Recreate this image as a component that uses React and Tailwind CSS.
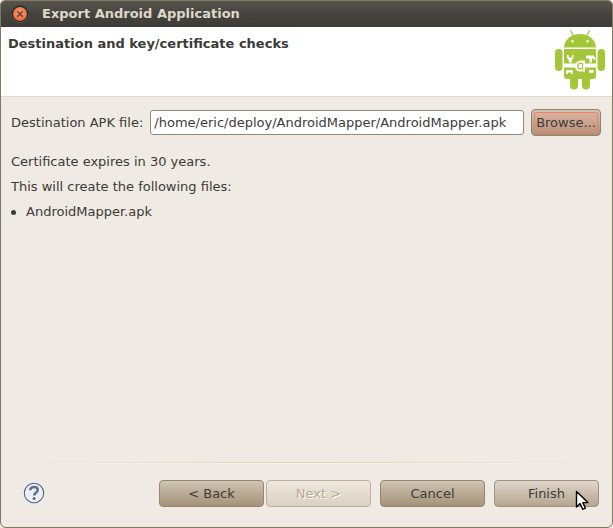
import { useState } from 'react';
import clsx from 'clsx';

const files = ['AndroidMapper.apk'];

function TitleBar({ title }) {
  return (
    <div className="flex h-[26px] shrink-0 items-center bg-linear-to-b from-[#57554e] via-[#45443f] to-[#3c3b37] pl-2.5">
      <button type="button" aria-label="Close" className="size-[18px] shrink-0">
        <svg viewBox="0 0 18 18" className="size-full">
          <defs>
            <radialGradient id="close-fill" cx="50%" cy="40%" r="65%">
              <stop offset="0" stopColor="#fb9b73" />
              <stop offset="0.6" stopColor="#f47c4e" />
              <stop offset="1" stopColor="#d9552a" />
            </radialGradient>
          </defs>
          <circle cx="9" cy="9.5" r="8.5" fill="#5f5d57" />
          <circle cx="9" cy="8.8" r="8.3" fill="#2b2a27" />
          <circle cx="9" cy="9" r="7" fill="url(#close-fill)" />
          <path d="M6.3 6.3l5.400 5.400M11.700 6.300l-5.400 5.400" stroke="#5c4438" strokeWidth="1.500" />
        </svg>
      </button>
      <h1 className="ml-[13px] text-[13px] font-bold text-[#dfd8c8]">{title}</h1>
    </div>
  );
}

function AndroidLogo() {
  return (
    <svg viewBox="0 0 52 60" className="h-[60px] w-[52px] shrink-0" aria-hidden="true">
      <g fill="#a4c639">
        <path d="M16.500 0.700l3.500 6M35.500 0.700l-3.500 6" stroke="#a4c639" strokeWidth="1.200" strokeLinecap="round" />
        <path d="M10 17.500C10.500 9.500 17 4 26 4s15.500 5.500 16 13.500z" />
        <rect x="1" y="19" width="7.500" height="22" rx="3.700" />
        <rect x="43.500" y="19" width="7.500" height="22" rx="3.700" />
        <path d="M10 19h32v27a3 3 0 0 1-3 3H13a3 3 0 0 1-3-3z" />
        <rect x="16" y="42" width="8" height="17.500" rx="4" />
        <rect x="28" y="42" width="8" height="17.500" rx="4" />
      </g>
      <g fill="#fff">
        <circle cx="18.500" cy="11.300" r="1.200" />
        <circle cx="33.500" cy="11.300" r="1.200" />
        {/* belt */}
        <path d="M10 33.500h12v4H10zM31 33.500h11v4H31z" />
        {/* wrench and hammer */}
        <path d="M13 25v3l1.800 2v2.500h3V30l1.700-2v-3h-1.600v2.500h-3.200V25z" />
        <path d="M32 25.500h7.500l1.800 2V30h-1.600v-1.500H38v4h-2.500v-4H32z" />
        <path d="M12 44v-2.500a1.500 1.500 0 0 1 1.500-1.500h4a1.500 1.500 0 0 1 1.500 1.500V44h-1.700v-1.500h-3.500V44zM35 40h4.500v2.800H35z" />
        {/* buckle */}
        <path d="M31 30.500v11h-5.300a5 5 0 0 1-4.500-4.800v-0.700a5.500 5.500 0 0 1 5.500-5.500z" />
      </g>
      <path d="M28.500 32.700v7M28.500 33.400h-2a2.700 2.700 0 0 0 0 5.500h2" fill="none" stroke="#a4c639" strokeWidth="1.300" />
    </svg>
  );
}

function HelpIcon() {
  return (
    <svg viewBox="0 0 22 22" className="size-[22px]">
      <circle cx="11" cy="11" r="9.700" fill="#eff0f1" stroke="#4c6188" strokeWidth="1.100" />
      <path
        d="M7.200 8.200C7.300 5.700 8.900 4.900 11 4.900c2.300 0 3.800 1.100 3.800 3 0 2.700-3.700 2.800-3.700 5.600"
        fill="none"
        stroke="#5d7194"
        strokeWidth="2.500"
      />
      <circle cx="11.100" cy="16.500" r="1.600" fill="#5d7194" />
    </svg>
  );
}

function Cursor() {
  return (
    <svg viewBox="0 0 14 21" className="pointer-events-none absolute top-2.5 right-2.5 h-[21px] w-[14px]">
      <path
        d="M1.500 1.500v15.500l3.600-3.400 2.600 5.700 2.700-1.200-2.500-5.500h5z"
        fill="#fff"
        stroke="#000"
        strokeWidth="1.400"
        strokeLinejoin="round"
      />
    </svg>
  );
}

function Divider() {
  return (
    <div className="mx-3 shrink-0">
      <div className="h-px bg-linear-to-r from-transparent via-[#ddd3bd] to-transparent" />
      <div className="h-px bg-linear-to-r from-transparent via-[#f8f5ee] to-transparent" />
    </div>
  );
}

function WizardButton({ children, variant = 'normal', ...props }) {
  return (
    <button
      type="button"
      className={clsx(
        'h-[27px] w-[105px] rounded-[4px] border bg-linear-to-b',
        variant === 'normal' && 'border-[#94866f] from-[#d1c4b4] via-[#b9aa95] to-[#a5937c]',
        variant === 'hover' && 'border-[#a09480] from-[#e0d7cc] via-[#cabdac] to-[#b5a690]',
        variant === 'disabled' && 'border-[#bdb19d] from-[#efe9e0] via-[#e4dbcf] to-[#dcd1c4] text-[#bba98c] text-shadow-[1px_1px_0_#fff]'
      )}
      {...props}
    >
      {children}
    </button>
  );
}

export default function App() {
  const [path, setPath] = useState('/home/eric/deploy/AndroidMapper/AndroidMapper.apk');

  return (
    <div className="h-screen bg-[#efebe3] font-['DejaVu_Sans',sans-serif] text-[13px] leading-4 text-[#3c3b37]">
      <div className="flex h-full flex-col overflow-hidden rounded-t-[5px] rounded-b-[6px] border border-[#857860] bg-[#efeae3]">
        <TitleBar title="Export Android Application" />

        {/* Wizard header */}
        <header className="flex h-[70px] shrink-0 items-start justify-between border-b border-[#dedacb] bg-white pl-[7px] pr-1.5">
          <h2 className="mt-[9px] font-bold">Destination and key/certificate checks</h2>
          <div className="mt-[3px]">
            <AndroidLogo />
          </div>
        </header>

        <main className="flex-1 px-2.5 pt-3">
          <div className="flex items-center">
            <label htmlFor="apk-path" className="shrink-0">Destination APK file:</label>
            <input
              id="apk-path"
              type="text"
              value={path}
              onChange={(e) => setPath(e.target.value)}
              className="ml-[7px] h-[25px] min-w-0 flex-1 rounded-[3px] border border-[#958a70] bg-white px-[3px] outline-none"
            />
            <button
              type="button"
              className="ml-[7px] mr-px h-[27px] w-[70px] shrink-0 rounded-[4px] border border-[#91836d] bg-linear-to-b from-[#d0c3b3] to-[#a5937c] p-0.5"
            >
              <span className="flex h-full items-center justify-center rounded-[2px] border border-[#ee8268] bg-linear-to-b from-[#d8b19e] to-[#bd957e]">
                Browse...
              </span>
            </button>
          </div>

          <p className="mt-[18px]">Certificate expires in 30 years.</p>
          <p className="mt-[9px]">This will create the following files:</p>
          <ul className="mt-[9px]">
            {files.map((file) => (
              <li key={file} className="flex items-center">
                <span className="mr-2.5 size-[5px] rounded-full bg-[#3c3b37]" />
                {file}
              </li>
            ))}
          </ul>
        </main>

        <Divider />

        {/* Wizard buttons */}
        <footer className="flex shrink-0 items-center justify-between pt-4 pr-[13px] pb-5 pl-[22px]">
          <button type="button" aria-label="Help" className="pb-0.5">
            <HelpIcon />
          </button>
          <div className="flex">
            <WizardButton>&lt; Back</WizardButton>
            <div className="ml-0.5">
              <WizardButton variant="disabled" disabled>Next &gt;</WizardButton>
            </div>
            <div className="ml-[9px]">
              <WizardButton>Cancel</WizardButton>
            </div>
            <div className="relative ml-[9px]">
              <WizardButton variant="hover">Finish</WizardButton>
              <Cursor />
            </div>
          </div>
        </footer>
      </div>
    </div>
  );
}
